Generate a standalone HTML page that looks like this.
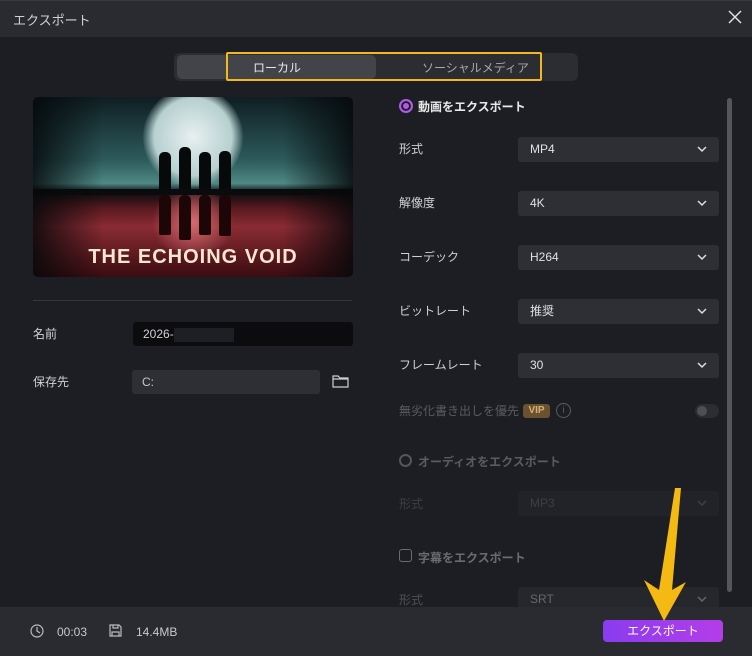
<!DOCTYPE html>
<html><head><meta charset="utf-8"><style>
*{margin:0;padding:0;box-sizing:border-box}
body{width:752px;height:656px;background:#1d1e23;font-family:"Liberation Sans","Noto Sans CJK JP",sans-serif;color:#d8d8dc;position:relative;overflow:hidden;font-size:12px}
.abs{position:absolute}
.title{left:0;top:0;width:752px;height:37px;background:#2a2b30;border-top:1px solid #3a3b40}
.lbl{position:absolute;font-size:12px;color:#d0d0d4;line-height:14px}
.dd{position:absolute;left:518px;width:201px;height:25px;background:#2e2f35;border-radius:3px;color:#e0e0e4;font-size:12px;line-height:25px;padding-left:12px}
.dd svg{position:absolute;right:12px;top:9px}
.dim{color:#5a5b60}
.fig{position:absolute;width:12px;background:#08090b;border-radius:5px 5px 2px 2px}
</style></head><body>
<div class="abs title"></div>
<div class="abs" style="left:13px;top:10px;font-size:13px;color:#d0d0d4">エクスポート</div>
<svg class="abs" style="left:728px;top:10px" width="14" height="14"><path d="M1 1L13 13M13 1L1 13" stroke="#e0e0e0" stroke-width="1.5"/></svg>

<div class="abs" style="left:174px;top:53px;width:404px;height:28px;background:#2c2d32;border-radius:6px"></div>
<div class="abs" style="left:177px;top:55px;width:199px;height:24px;background:#434449;border-radius:5px"></div>
<div class="abs" style="left:226px;top:52px;width:316px;height:29px;border:2px solid #f2b81e;border-radius:2px"></div>
<div class="abs" style="left:253px;top:59px;font-size:12px;color:#e8e8ea">ローカル</div>
<div class="abs" style="left:422px;top:59px;font-size:12px;color:#a8a8ae">ソーシャルメディア</div>

<div class="abs" style="left:33px;top:97px;width:320px;height:180px;border-radius:5px;overflow:hidden;background:linear-gradient(180deg,#0f1e22 0%,#2d5a5c 35%,#4f8985 48%,#0c0c0e 53%,#5a1a20 62%,#8a2b33 72%,#3a0c10 100%)">
 <div class="abs" style="left:110px;top:-10px;width:100px;height:100px;border-radius:50%;background:radial-gradient(circle,#e8f0f0 0%,#b7d0d0 55%,rgba(120,170,170,0) 72%)"></div>
 <div class="abs" style="left:110px;top:95px;width:100px;height:60px;border-radius:50%;background:radial-gradient(circle,#d46a70 0%,rgba(160,40,50,0) 70%)"></div>
 <div class="fig" style="left:126px;top:55px;height:40px"></div>
 <div class="fig" style="left:146px;top:50px;height:45px"></div>
 <div class="fig" style="left:166px;top:55px;height:40px"></div>
 <div class="fig" style="left:186px;top:54px;height:41px"></div>
 <div class="fig" style="left:126px;top:98px;height:40px;background:#1c0608"></div>
 <div class="fig" style="left:146px;top:98px;height:45px;background:#1c0608"></div>
 <div class="fig" style="left:166px;top:98px;height:40px;background:#1c0608"></div>
 <div class="fig" style="left:186px;top:98px;height:41px;background:#1c0608"></div>
 <div class="abs" style="left:0;top:92px;width:320px;height:6px;background:#0a0b0c"></div>
 <div class="abs" style="left:0;top:0;width:70px;height:180px;background:linear-gradient(90deg,rgba(5,8,10,.85),rgba(0,0,0,0))"></div>
 <div class="abs" style="right:0;top:0;width:70px;height:180px;background:linear-gradient(270deg,rgba(5,8,10,.85),rgba(0,0,0,0))"></div>
 <div class="abs" style="left:0;top:149px;width:320px;text-align:center;font:bold 20px 'Liberation Sans',sans-serif;color:#f3e8cf;letter-spacing:1px">THE ECHOING VOID</div>
</div>

<div class="abs" style="left:33px;top:300px;width:319px;height:1px;background:#35363b"></div>
<div class="lbl" style="left:33px;top:327px">名前</div>
<div class="abs" style="left:133px;top:322px;width:220px;height:24px;background:#0c0c0f;border-radius:3px;color:#d0d0d4;line-height:24px;padding-left:10px">2026-<span style="display:inline-block;width:60px;height:14px;background:#1e1f24;vertical-align:middle"></span></div>
<div class="lbl" style="left:33px;top:375px">保存先</div>
<div class="abs" style="left:132px;top:370px;width:188px;height:24px;background:#2e2f35;border-radius:3px;color:#c8c8cc;line-height:24px;padding-left:10px">C:</div>
<svg class="abs" style="left:332px;top:374px" width="17" height="14"><path d="M1 2h5l2 2h8v9H1z M1 5h15" fill="none" stroke="#cfcfd3" stroke-width="1.2"/></svg>

<div class="abs" style="left:399px;top:99px;width:14px;height:14px;border-radius:50%;border:2px solid #b05ae8;background:#b05ae8;box-shadow:inset 0 0 0 2px #1d1e23"></div>
<div class="abs" style="left:418px;top:98px;font-weight:bold;font-size:12px;color:#e8e8ea">動画をエクスポート</div>

<div class="lbl" style="left:399px;top:142px">形式</div><div class="dd" style="top:137px">MP4<svg width="10" height="7"><path d="M1 1l4 4 4-4" fill="none" stroke="#ddd" stroke-width="1.5"/></svg></div>
<div class="lbl" style="left:399px;top:196px">解像度</div><div class="dd" style="top:191px">4K<svg width="10" height="7"><path d="M1 1l4 4 4-4" fill="none" stroke="#ddd" stroke-width="1.5"/></svg></div>
<div class="lbl" style="left:399px;top:250px">コーデック</div><div class="dd" style="top:245px">H264<svg width="10" height="7"><path d="M1 1l4 4 4-4" fill="none" stroke="#ddd" stroke-width="1.5"/></svg></div>
<div class="lbl" style="left:399px;top:304px">ビットレート</div><div class="dd" style="top:299px">推奨<svg width="10" height="7"><path d="M1 1l4 4 4-4" fill="none" stroke="#ddd" stroke-width="1.5"/></svg></div>
<div class="lbl" style="left:399px;top:358px">フレームレート</div><div class="dd" style="top:353px">30<svg width="10" height="7"><path d="M1 1l4 4 4-4" fill="none" stroke="#ddd" stroke-width="1.5"/></svg></div>

<div class="lbl dim" style="left:399px;top:404px">無劣化書き出しを優先</div>
<div class="abs" style="left:523px;top:404px;width:27px;height:14px;background:#6a5230;border-radius:3px;color:#d8b070;font-size:10px;font-weight:bold;text-align:center;line-height:14px">VIP</div>
<div class="abs" style="left:556px;top:403px;width:15px;height:15px;border-radius:50%;border:1px solid #5a5b60;color:#5a5b60;font-size:10px;text-align:center;line-height:13px">i</div>
<div class="abs" style="left:695px;top:404px;width:24px;height:14px;border-radius:7px;background:#2c2d32"><div style="position:absolute;left:2px;top:2px;width:10px;height:10px;border-radius:50%;background:#4e4f55"></div></div>

<div class="abs" style="left:399px;top:454px;width:13px;height:13px;border-radius:50%;border:2px solid #55565b"></div>
<div class="abs dim" style="left:418px;top:453px;font-weight:bold">オーディオをエクスポート</div>
<div class="lbl" style="left:399px;top:497px;color:#3e3f44">形式</div>
<div class="dd" style="top:491px;background:#222328;color:#3e3f44">MP3<svg width="10" height="7"><path d="M1 1l4 4 4-4" fill="none" stroke="#3e3f44" stroke-width="1.5"/></svg></div>

<div class="abs" style="left:399px;top:549px;width:13px;height:13px;border-radius:3px;border:1.5px solid #6a6b70"></div>
<div class="abs dim" style="left:418px;top:549px;font-weight:bold;color:#6a6b70">字幕をエクスポート</div>
<div class="lbl" style="left:399px;top:593px;color:#4e4f54">形式</div>
<div class="dd" style="top:587px;background:#26272c;color:#66676c">SRT<svg width="10" height="7"><path d="M1 1l4 4 4-4" fill="none" stroke="#66676c" stroke-width="1.5"/></svg></div>

<div class="abs" style="left:727px;top:98px;width:5px;height:494px;background:#55565b;border-radius:3px"></div>

<div class="abs" style="left:0;top:607px;width:752px;height:49px;background:#2a2b30"></div>
<svg class="abs" style="left:30px;top:624px" width="14" height="14"><circle cx="7" cy="7" r="6" fill="none" stroke="#bbb" stroke-width="1.2"/><path d="M7 3v4l3 2" fill="none" stroke="#bbb" stroke-width="1.2"/></svg>
<div class="abs" style="left:57px;top:625px;color:#c8c8cc">00:03</div>
<svg class="abs" style="left:109px;top:624px" width="13" height="13"><path d="M1 1h9l2 2v9H1z M4 1v3h5V1 M3 12V8h7v4" fill="none" stroke="#bbb" stroke-width="1.2"/></svg>
<div class="abs" style="left:136px;top:625px;color:#c8c8cc">14.4MB</div>
<div class="abs" style="left:603px;top:620px;width:120px;height:22px;border-radius:4px;background:linear-gradient(90deg,#8a3cf0,#b43de8);color:#fff;text-align:center;line-height:22px;font-size:12px">エクスポート</div>
<svg class="abs" style="left:636px;top:486px" width="50" height="140"><path d="M45 2 L36 104 L50 96 L28 135 L8 94 L23 104 L39 2 Z" fill="#f5b914"/></svg>
</body></html>
